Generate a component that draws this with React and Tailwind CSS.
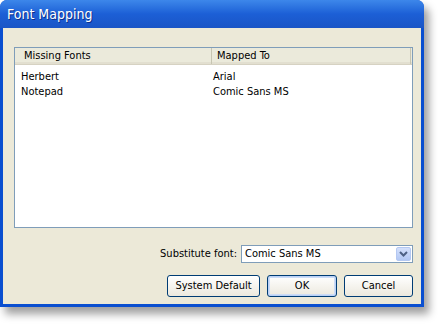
export default function App() {
  const rows = [
    { missing: 'Herbert', mapped: 'Arial' },
    { missing: 'Notepad', mapped: 'Comic Sans MS' },
  ];

  return (
    <div className="w-[438px] h-[325px] bg-white" style={{ fontFamily: '"DejaVu Sans Condensed", "DejaVu Sans", sans-serif' }}>
      <div className="w-[424px] h-[307px] flex flex-col rounded-t-[7px] bg-[#0a4fd0] shadow-[5px_7px_9px_rgba(0,0,0,0.38)]">
        {/* title bar */}
        <div className="h-[28px] shrink-0 rounded-t-[7px] bg-gradient-to-b from-[#3d87ea] via-[#1c5fd6] to-[#1a55c6] flex items-center px-[7px]">
          <span className="text-white text-[14px] font-normal [text-shadow:1px_1px_0_#0d2f8a]">Font Mapping</span>
        </div>
        {/* body */}
        <div className="flex-1 mx-[3px] mb-[3px] bg-[#ece9d8] flex flex-col pt-[19px] pl-[11px] pr-[8px] text-[11px] text-black">
          <div className="h-[181px] border border-[#7f9db9] bg-white flex flex-col">
            <div className="h-[17px] flex bg-[#ebeadb] border-b border-[#d6d2c2] shadow-[inset_0_-2px_0_#e2dfd0]">
              <div className="w-[197px] flex items-center pl-[9px] border-r border-[#c7c5b2]">Missing Fonts</div>
              <div className="flex-1 flex items-center pl-[5px] border-r border-[#c7c5b2]">Mapped To</div>
              <div className="w-[1px]" />
            </div>
            <div className="pt-[5px]">
              {rows.map((r) => (
                <div key={r.missing} className="h-[15px] flex items-center">
                  <div className="w-[198px] pl-[6px]">{r.missing}</div>
                  <div className="flex-1">{r.mapped}</div>
                </div>
              ))}
            </div>
          </div>

          <div className="mt-[17px] h-[18px] flex items-center justify-end gap-[4px]">
            <span>Substitute font:</span>
            <div className="w-[172px] h-[18px] bg-white border border-[#7f9db9] flex items-center">
              <span className="flex-1 pl-[3px]">Comic Sans MS</span>
              <div className="w-[15px] h-[14px] mr-[1px] rounded-[2px] bg-gradient-to-b from-[#d4e0fb] to-[#b2c8f4] border border-[#b4c8f2] flex items-center justify-center">
                <svg width="9" height="6" viewBox="0 0 9 6">
                  <path d="M1 1 L4.5 4.5 L8 1" fill="none" stroke="#4d6185" strokeWidth="2" />
                </svg>
              </div>
            </div>
          </div>

          <div className="mt-[12px] flex justify-end gap-[7px]">
            <button className="w-[93px] h-[22px] rounded-[3px] border border-[#003c74] bg-gradient-to-b from-white to-[#ece9de] text-[11px]">System Default</button>
            <button className="w-[70px] h-[22px] rounded-[3px] border border-[#003c74] bg-gradient-to-b from-white to-[#ece9de] shadow-[inset_0_0_0_1px_#b9d1f6,inset_0_0_0_2px_#cddcf6] text-[11px]">OK</button>
            <button className="w-[69px] h-[22px] rounded-[3px] border border-[#003c74] bg-gradient-to-b from-white to-[#ece9de] text-[11px]">Cancel</button>
          </div>
        </div>
      </div>
    </div>
  );
}
